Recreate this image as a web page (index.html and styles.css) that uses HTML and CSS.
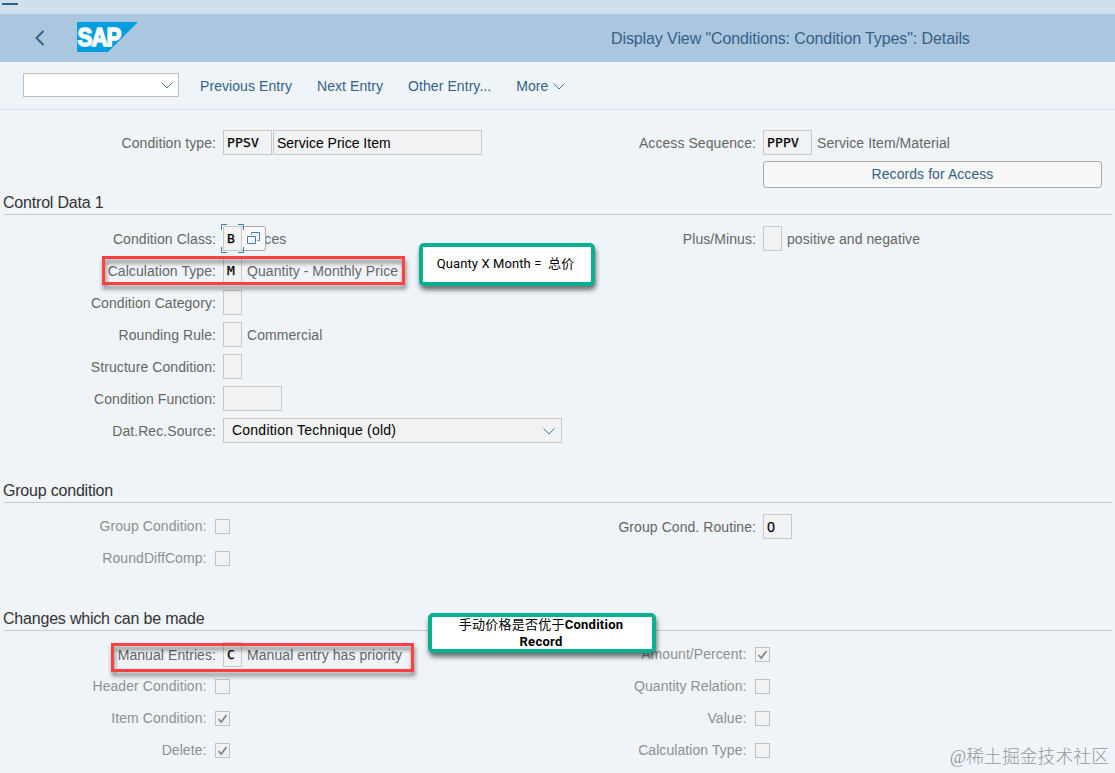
FILE: index.html
```html
<!DOCTYPE html>
<html lang="en">

<head>
    <meta charset="UTF-8">
    <meta name="viewport" content="width=device-width, initial-scale=1.0">
    <title>Display View "Conditions: Condition Types": Details</title>
    <link rel="stylesheet" href="styles.css">
</head>

<body>
    <div class="top-strip"><span class="menu-line"></span></div>

    <header class="header">
        <svg class="back" width="10" height="16" viewBox="0 0 10 16"><path d="M8.5 1 L1.5 8 L8.5 15" fill="none" stroke="#2f618c" stroke-width="2"/></svg>
        <div class="logo">
            <svg width="61" height="30" viewBox="0 0 61 30">
                <path d="M0 0 H61 L31 30 H0 Z" fill="#009de0"/>
                <text x="0.5" y="23.5" textLength="43" lengthAdjust="spacingAndGlyphs">SAP</text>
            </svg>
        </div>
        <h1>Display View "Conditions: Condition Types": Details</h1>
    </header>

    <nav class="toolbar">
        <div class="command">
            <svg class="chevron" width="12" height="7" viewBox="0 0 12 7"><path d="M0.5 0.5 L6 6 L11.5 0.5"/></svg>
        </div>
        <a>Previous Entry</a>
        <a>Next Entry</a>
        <a>Other Entry...</a>
        <a>More <svg class="chevron" width="12" height="7" viewBox="0 0 12 7"><path d="M0.5 0.5 L6 6 L11.5 0.5"/></svg></a>
    </nav>

    <main>
        <section class="columns first">
            <div class="column">
                <div class="row">
                    <label>Condition type:</label>
                    <span class="field w4">PPSV</span>
                    <span class="field long">Service Price Item</span>
                </div>
            </div>
            <div class="column">
                <div class="row">
                    <label>Access Sequence:</label>
                    <span class="field w4">PPPV</span>
                    <span class="desc">Service Item/Material</span>
                </div>
                <div class="row">
                    <label></label>
                    <button type="button" class="records">Records for Access</button>
                </div>
            </div>
        </section>

        <!-- Control data -->
        <h2>Control Data 1</h2>
        <section class="columns">
            <div class="column">
                <div class="row">
                    <label>Condition Class:</label>
                    <span class="field w1 focused">B
                        <svg class="corners" width="23" height="29" viewBox="0 0 23 29"><path d="M0.5 6 V0.5 H6 M17 0.5 H22.5 V6 M22.5 23 V28.5 H17 M6 28.5 H0.5 V23"/></svg>
                        <span class="help">
                            <svg width="13" height="13" viewBox="0 0 13 13"><path d="M0.5 4.5 H8.5 V11.5 H0.5 Z M4.5 2.5 V0.5 H12.5 V8.5 H10.5"/></svg>
                        </span>
                    </span>
                    <span class="desc">Prices</span>
                </div>
                <div class="row">
                    <label>Calculation Type:</label>
                    <span class="field w1">M</span>
                    <span class="desc">Quantity - Monthly Price</span>
                    <span class="mark mark-calc"></span>
                    <span class="note note-calc">Quanty X Month =&nbsp; <b>总价</b></span>
                </div>
                <div class="row">
                    <label>Condition Category:</label>
                    <span class="field w1"></span>
                </div>
                <div class="row">
                    <label>Rounding Rule:</label>
                    <span class="field w1"></span>
                    <span class="desc">Commercial</span>
                </div>
                <div class="row">
                    <label>Structure Condition:</label>
                    <span class="field w1"></span>
                </div>
                <div class="row">
                    <label>Condition Function:</label>
                    <span class="field w5"></span>
                </div>
                <div class="row">
                    <label>Dat.Rec.Source:</label>
                    <span class="field select">Condition Technique (old)
                        <svg class="chevron" width="12" height="7" viewBox="0 0 12 7"><path d="M0.5 0.5 L6 6 L11.5 0.5"/></svg>
                    </span>
                </div>
            </div>
            <div class="column">
                <div class="row">
                    <label>Plus/Minus:</label>
                    <span class="field w1"></span>
                    <span class="desc">positive and negative</span>
                </div>
            </div>
        </section>

        <!-- Group condition -->
        <h2 class="spaced">Group condition</h2>
        <section class="columns">
            <div class="column">
                <div class="row check"><label>Group Condition:</label><span class="box"></span></div>
                <div class="row check"><label>RoundDiffComp:</label><span class="box"></span></div>
            </div>
            <div class="column">
                <div class="row">
                    <label>Group Cond. Routine:</label>
                    <span class="field w2 number">0</span>
                </div>
            </div>
        </section>

        <!-- Changes -->
        <h2 class="spaced">Changes which can be made</h2>
        <section class="columns">
            <div class="column">
                <div class="row">
                    <label>Manual Entries:</label>
                    <span class="field w1">C</span>
                    <span class="desc">Manual entry has priority</span>
                    <span class="mark mark-manual"></span>
                    <span class="note note-manual"><span>手动价格是否优于</span>Condition<br>Record</span>
                </div>
                <div class="row check"><label>Header Condition:</label><span class="box"></span></div>
                <div class="row check"><label>Item Condition:</label><span class="box"><svg width="13" height="13" viewBox="0 0 13 13"><path d="M2.5 7 L5.3 10 L10.5 3"/></svg></span></div>
                <div class="row check"><label>Delete:</label><span class="box"><svg width="13" height="13" viewBox="0 0 13 13"><path d="M2.5 7 L5.3 10 L10.5 3"/></svg></span></div>
            </div>
            <div class="column">
                <div class="row check"><label>Amount/Percent:</label><span class="box"><svg width="13" height="13" viewBox="0 0 13 13"><path d="M2.5 7 L5.3 10 L10.5 3"/></svg></span></div>
                <div class="row check"><label>Quantity Relation:</label><span class="box"></span></div>
                <div class="row check"><label>Value:</label><span class="box"></span></div>
                <div class="row check"><label>Calculation Type:</label><span class="box"></span></div>
            </div>
        </section>
    </main>

    <div class="watermark">@稀土掘金技术社区</div>
</body>

</html>
```

FILE: styles.css
```css
* {
    box-sizing: border-box;
}

body {
    margin: 0;
    height: 773px;
    overflow: hidden;
    position: relative;
    background-color: #eff4f8;
    font-family: "Liberation Sans", Arial, sans-serif;
    font-size: 14px;
    letter-spacing: 0.07px;
    color: #666;
}

h1,
h2 {
    margin: 0;
    font-size: 16px;
    font-weight: normal;
}

svg {
    display: block;
    overflow: visible;
    fill: none;
}

.top-strip {
    height: 14px;
    padding: 3px 2px;
    background-color: #cfdfec;
}

.menu-line {
    display: block;
    width: 16px;
    height: 2px;
    background-color: #2f618c;
}

.header {
    display: flex;
    align-items: center;
    height: 48px;
    padding-left: 35px;
    background-color: #abc6df;
}

.logo {
    margin: 0 473px 2px 32px;
}

.logo text {
    font-family: "Liberation Sans", Arial, sans-serif;
    font-size: 25px;
    font-weight: bold;
    letter-spacing: -1px;
    fill: #fff;
    stroke: #fff;
    stroke-width: 1.5;
}

h1 {
    padding-top: 2px;
    color: #346187;
    letter-spacing: -0.1px;
    white-space: nowrap;
}

.toolbar {
    display: flex;
    align-items: center;
    gap: 25px;
    height: 48px;
    padding: 0 23px;
    border-bottom: 1px solid #d1e0ee;
    color: #346187;
    white-space: nowrap;
}

.toolbar a {
    display: flex;
    align-items: center;
    gap: 5px;
    padding-top: 1px;
}

.command {
    display: flex;
    align-items: center;
    justify-content: flex-end;
    width: 156px;
    height: 24px;
    margin: 0 -4px 1px 0;
    padding-right: 5px;
    border: 1px solid #bfbfbf;
    background-color: #fff;
}

.chevron path {
    stroke: #427cac;
    stroke-width: 1;
}

.first {
    padding-top: 17px;
}

h2 {
    height: 24px;
    margin: 0 3px 8px;
    line-height: 23px;
    letter-spacing: -0.2px;
    border-bottom: 1px solid #c9c9c9;
    color: #333;
}

h2.spaced {
    margin-top: 32px;
}

.columns {
    display: grid;
    grid-template-columns: 540px 1fr;
}

.row {
    position: relative;
    display: flex;
    align-items: center;
    height: 32px;
    white-space: nowrap;
}

.row label {
    flex: none;
    width: 216px;
    margin-right: 7px;
    padding-bottom: 1px;
    text-align: right;
}

.check label {
    width: 206.5px;
    margin-right: 8.5px;
    padding-bottom: 2px;
    color: #8e9093;
}

.field {
    position: relative;
    display: flex;
    flex: none;
    align-items: center;
    height: 25px;
    margin-bottom: 1px;
    padding-left: 3px;
    border: 1px solid #c9c9c9;
    background-color: #f1f2f3;
    color: #000;
    font-family: "DejaVu Sans Mono", monospace;
    font-size: 13px;
    letter-spacing: 0.2px;
    -webkit-text-stroke: 0.25px #000;
}

.w1 {
    width: 19px;
}

.w2 {
    width: 29px;
}

.w4 {
    width: 49px;
}

.w5 {
    width: 59px;
}

.number {
    font-family: "Noto Sans", sans-serif;
    font-size: 14px;
}

.long,
.select {
    font-family: "Liberation Sans", Arial, sans-serif;
    font-size: 14px;
    letter-spacing: 0;
    -webkit-text-stroke: 0;
}

.long {
    width: 209px;
    margin-left: 1px;
}

.select {
    width: 339px;
    justify-content: space-between;
    padding: 0 6px 1px 8px;
    letter-spacing: 0.23px;
}

.select .chevron {
    margin-top: 2px;
}

.desc {
    margin-left: 5px;
    padding-bottom: 1px;
}

.records {
    width: 339px;
    height: 27px;
    margin-top: -1px;
    padding-bottom: 3px;
    border: 1px solid #ababab;
    border-radius: 3px;
    background-color: #f7f7f7;
    color: #346187;
    font: inherit;
    letter-spacing: inherit;
}

/* focus corners and value help */
.focused {
    z-index: 1;
}

.corners {
    position: absolute;
    left: -3px;
    top: -3px;
    z-index: 1;
}

.corners path,
.help path {
    stroke: #427cac;
}

.help {
    position: absolute;
    left: 17px;
    top: -1px;
    display: flex;
    align-items: center;
    justify-content: center;
    width: 25px;
    height: 25px;
    border: 1px solid #ababab;
    border-left-color: #c9c9c9;
    border-radius: 0 3px 3px 0;
    background-color: #f7f7f7;
}

.box {
    width: 15px;
    height: 15px;
    margin-bottom: 1px;
    border: 1px solid #bfc1c3;
    background-color: #f2f2f2;
}

.box path {
    stroke: #858585;
    stroke-width: 1.8;
}

/* annotations */
.mark {
    position: absolute;
    z-index: 2;
    width: 303px;
    height: 29px;
    border: 3px solid #ff4141;
    filter: drop-shadow(1px 4px 2px rgba(0, 0, 0, 0.5));
}

.mark-calc {
    left: 102px;
    top: 1px;
}

.mark-manual {
    left: 111px;
    top: 4px;
}

.note {
    position: absolute;
    z-index: 3;
    border: 4px solid #08b091;
    border-radius: 5px;
    background-color: #fff;
    box-shadow: 1px 4px 5px rgba(0, 0, 0, 0.55);
    color: #000;
    font-family: Roboto, "Noto Sans CJK SC", sans-serif;
    font-size: 13px;
    text-align: center;
}

.note-calc {
    left: 419px;
    top: -12px;
    width: 176px;
    height: 43px;
    padding-right: 3px;
    letter-spacing: 0.1px;
    line-height: 33px;
}

.note-calc b {
    font-weight: normal;
}

.note-manual {
    left: 428px;
    top: -26px;
    width: 228px;
    height: 40px;
    padding-right: 2px;
    font-weight: bold;
    letter-spacing: 0.25px;
    line-height: 16.5px;
}

.note-manual span {
    font-weight: normal;
}

.watermark {
    position: absolute;
    right: 6px;
    bottom: 3px;
    color: #96999c;
    font-family: "Liberation Serif", "Noto Sans CJK SC", sans-serif;
    font-size: 17.8px;
    font-weight: 300;
    line-height: 26px;
}
```
